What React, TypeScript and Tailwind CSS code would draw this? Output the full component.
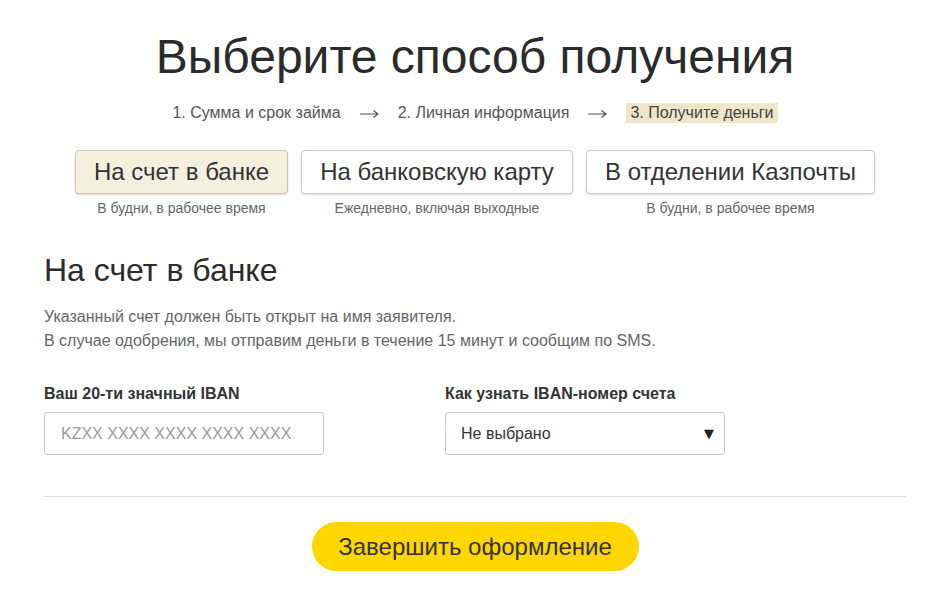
import React from 'react';

const methods = [
  { title: 'На счет в банке', note: 'В будни, в рабочее время', active: true, w: 'w-[213px]' },
  { title: 'На банковскую карту', note: 'Ежедневно, включая выходные', active: false, w: 'w-[272px]' },
  { title: 'В отделении Казпочты', note: 'В будни, в рабочее время', active: false, w: 'w-[289px]' },
];

const Arrow = () => (
  <svg className="mx-[19px] mt-[2px]" width="19" height="10" viewBox="0 0 19 10" fill="none">
    <path d="M0 5h17.5M13.5 1.5L18 5l-4.5 3.5" stroke="#555" strokeWidth="1.2" />
  </svg>
);

const App = () => {
  return (
    <div className="w-[927px] h-[589px] bg-white text-[#333] font-['Liberation_Sans',Arial,sans-serif]">
      <div className="ml-[44px] w-[862px] flex flex-col">
        <h1 className="mt-[27px] text-center text-[48px] leading-[60px] text-[#2b2b2b]">
          Выберите способ получения
        </h1>

        <div className="mt-[16px] flex justify-center items-center text-[16px] leading-[20px] text-[#555]">
          <span>1. Сумма и срок займа</span>
          <Arrow />
          <span>2. Личная информация</span>
          <Arrow />
          <span className="bg-[#efe6c9] px-[4px] text-[#444]">3. Получите деньги</span>
        </div>

        <div className="mt-[27px] flex justify-center gap-[13px]">
          {methods.map((m) => (
            <div key={m.title} className={`flex flex-col items-center ${m.w}`}>
              <button
                className={`w-full h-[44px] rounded-[4px] border text-[24px] text-[#333] shadow-[0_1px_2px_rgba(0,0,0,0.15)] ${
                  m.active ? 'bg-[#f5efe0] border-[#cfc7b3]' : 'bg-white border-[#cccccc]'
                }`}
              >
                {m.title}
              </button>
              <span className="mt-[5px] text-[14px] leading-[18px] text-[#666]">{m.note}</span>
            </div>
          ))}
        </div>

        <h2 className="mt-[34px] text-[32px] leading-[38px] text-[#2b2b2b]">На счет в банке</h2>

        <div className="mt-[16px] text-[16px] leading-[24px] text-[#666]">
          <p>Указанный счет должен быть открыт на имя заявителя.</p>
          <p>В случае одобрения, мы отправим деньги в течение 15 минут и сообщим по SMS.</p>
        </div>

        <div className="mt-[31px] flex gap-[121px]">
          <div className="flex flex-col w-[280px]">
            <label className="text-[16px] leading-[20px] font-bold text-[#333]">Ваш 20-ти значный IBAN</label>
            <input
              placeholder="KZXX XXXX XXXX XXXX XXXX"
              className="mt-[8px] h-[43px] rounded-[3px] border border-[#c8c8c8] px-[16px] text-[16px] text-[#333] placeholder:text-[#9a9a9a] outline-none"
            />
          </div>
          <div className="flex flex-col w-[280px]">
            <label className="text-[16px] leading-[20px] font-bold text-[#333]">Как узнать IBAN-номер счета</label>
            <div className="mt-[8px] h-[43px] rounded-[3px] border border-[#c8c8c8] pl-[15px] pr-[10px] flex items-center justify-between text-[16px] text-[#333]">
              <span>Не выбрано</span>
              <span className="text-[13px] text-[#222] font-['DejaVu_Sans',sans-serif]">▼</span>
            </div>
          </div>
        </div>

        <div className="mt-[41px] h-px bg-[#e0e0e0]" />

        <div className="mt-[25px] flex justify-center">
          <button className="w-[327px] h-[49px] rounded-full bg-[#ffd700] text-[24px] text-[#333]">
            Завершить оформление
          </button>
        </div>
      </div>
    </div>
  );
};

export default App;
